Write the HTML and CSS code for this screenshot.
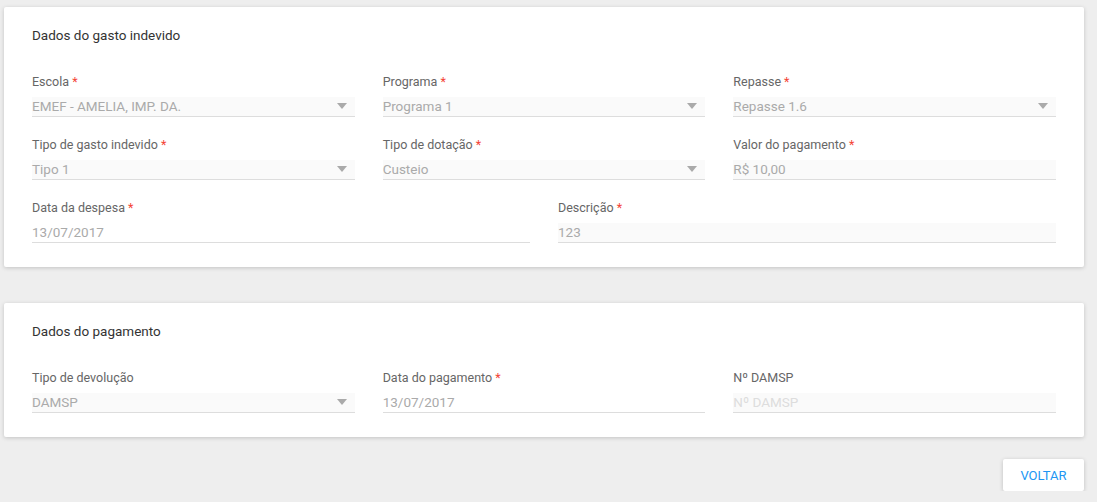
FILE: index.html
```html
<!DOCTYPE html>
<html lang="pt">
<head>
    <meta charset="UTF-8">
    <meta name="viewport" content="width=device-width, initial-scale=1.0">
    <title>Gasto indevido</title>
    <link rel="stylesheet" href="styles.css">
</head>
<body>

    <div class="card">
        <h3 class="card-title">Dados do gasto indevido</h3>

        <div class="row">
            <div class="field">
                <label>Escola <span class="req">*</span></label>
                <div class="input select">EMEF - AMELIA, IMP. DA.</div>
            </div>
            <div class="field">
                <label>Programa <span class="req">*</span></label>
                <div class="input select">Programa 1</div>
            </div>
            <div class="field">
                <label>Repasse <span class="req">*</span></label>
                <div class="input select">Repasse 1.6</div>
            </div>
        </div>

        <div class="row">
            <div class="field">
                <label>Tipo de gasto indevido <span class="req">*</span></label>
                <div class="input select">Tipo 1</div>
            </div>
            <div class="field">
                <label>Tipo de dotação <span class="req">*</span></label>
                <div class="input select">Custeio</div>
            </div>
            <div class="field">
                <label>Valor do pagamento <span class="req">*</span></label>
                <div class="input">R$ 10,00</div>
            </div>
        </div>

        <div class="row two">
            <div class="field">
                <label>Data da despesa <span class="req">*</span></label>
                <div class="input date">13/07/2017</div>
            </div>
            <div class="field">
                <label>Descrição <span class="req">*</span></label>
                <div class="input">123</div>
            </div>
        </div>
    </div>

    <div class="card">
        <h3 class="card-title">Dados do pagamento</h3>

        <div class="row">
            <div class="field">
                <label>Tipo de devolução</label>
                <div class="input select">DAMSP</div>
            </div>
            <div class="field">
                <label>Data do pagamento <span class="req">*</span></label>
                <div class="input date">13/07/2017</div>
            </div>
            <div class="field">
                <label>Nº DAMSP</label>
                <div class="input placeholder">Nº DAMSP</div>
            </div>
        </div>
    </div>

    <div class="actions">
        <button class="back-btn">Voltar</button>
    </div>

</body>
</html>
```

FILE: styles.css
```css
body {
    margin: 0;
    padding: 7px 13px 0 4px;
    background-color: #eeeeee;
    font-family: Roboto, 'Liberation Sans', sans-serif;
}

.card {
    background: white;
    border-radius: 2px;
    box-shadow: 0 1px 4px rgba(0, 0, 0, 0.18);
    padding: 18px 28px 24px;
}

.card + .card {
    margin-top: 36px;
}

.card-title {
    margin: 0 0 29px;
    font-size: 13.5px;
    line-height: 20px;
    font-weight: normal;
    color: #333;
}

.row {
    display: grid;
    grid-template-columns: repeat(3, 1fr);
    column-gap: 28px;
    margin-bottom: 20px;
}

.row:last-child {
    margin-bottom: 0;
}

.row.two {
    grid-template-columns: repeat(2, 1fr);
}

.field label {
    display: block;
    font-size: 12.5px;
    line-height: 16px;
    color: #666;
    margin-bottom: 7px;
}

.req {
    color: #f44336;
}

.input {
    position: relative;
    height: 19px;
    line-height: 19px;
    font-size: 13.5px;
    color: #aaa;
    background: #fafafa;
    border-bottom: 1px solid #ddd;
}

.input.date {
    background: transparent;
}

.input.placeholder {
    color: #ddd;
}

.input.select::after {
    content: "";
    position: absolute;
    right: 8px;
    top: 6px;
    border-left: 5px solid transparent;
    border-right: 5px solid transparent;
    border-top: 6px solid #aaa;
}

.actions {
    display: flex;
    justify-content: flex-end;
    margin-top: 22px;
}

.back-btn {
    width: 81px;
    height: 32px;
    background: white;
    border: none;
    border-radius: 2px;
    box-shadow: 0 1px 4px rgba(0, 0, 0, 0.2);
    color: #2196f3;
    font-family: Roboto, 'Liberation Sans', sans-serif;
    font-size: 13px;
    text-transform: uppercase;
    cursor: pointer;
}
```
